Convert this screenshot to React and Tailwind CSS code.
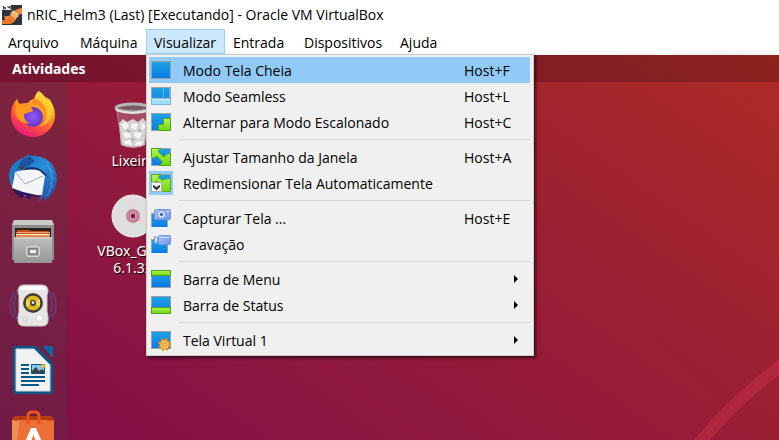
import React from "react";

function Gradients() {
  return (
    <svg className="absolute h-0 w-0" aria-hidden="true">
      <defs>
        <linearGradient id="blue" x1="0" y1="0" x2="0" y2="1">
          <stop offset="0" stopColor="#1fa3e4" />
          <stop offset="1" stopColor="#067be8" />
        </linearGradient>
        <linearGradient id="green" x1="0" y1="0" x2="0" y2="1">
          <stop offset="0" stopColor="#b4f550" />
          <stop offset="1" stopColor="#6fd80c" />
        </linearGradient>
        <linearGradient id="lilac" x1="0" y1="0" x2="1" y2="1">
          <stop offset="0" stopColor="#b3cbff" />
          <stop offset="1" stopColor="#6a90ee" />
        </linearGradient>
      </defs>
    </svg>
  );
}

function Frame({ children }) {
  return (
    <svg viewBox="0 0 20 18" className="h-[18px] w-5" aria-hidden="true">
      {children}
    </svg>
  );
}

function Screen() {
  return <rect x="0.5" y="0.5" width="19" height="17" fill="url(#blue)" stroke="#9aa0a6" />;
}

function SmallScreen() {
  return <rect x="0.5" y="4.5" width="16" height="14" fill="url(#blue)" stroke="#9aa0a6" />;
}

const icons = {
  full: (
    <Frame>
      <Screen />
    </Frame>
  ),
  seamless: (
    <Frame>
      <Screen />
      <path d="M12.5 1v10M18.5 1v10" stroke="#5cb8f2" />
      <path d="M1 10.500h18" stroke="#3f9ada" />
      <rect x="0.5" y="11.5" width="19" height="6" fill="#9be2ff" stroke="#7fb4d4" />
      <path d="M1 12.500h18" stroke="#d8f4ff" />
    </Frame>
  ),
  scale: (
    <Frame>
      <Screen />
      <path d="M7.500 17.500v-5q0-1 1-1h4v-5q0-1 1-1h6v12z" fill="url(#green)" stroke="#4fa61a" />
    </Frame>
  ),
  adjust: (
    <Frame>
      <Screen />
      <path
        d="M.5.500h9L7 3.500l6 5.500 3-3 3.500-.500v12H8.500L11.500 14 5.500 8 3 10.500.5 9z"
        fill="url(#green)"
        stroke="#4fa61a"
      />
    </Frame>
  ),
  resize: (
    <Frame>
      <Screen />
      <path
        d="M.5.500h9L7 3.500l5 3L13 5l6.500-.500v13H8.500V9L5.500 7 2.500 9l-2-1z"
        fill="url(#green)"
        stroke="#5cab26"
      />
      <path d="M10.500 1H19v4l-3-1-2 2-3-3z" fill="#1c9ee6" />
      <rect x="0.500" y="8.500" width="10" height="9" fill="#fff" stroke="#a3adb3" />
      <path d="M2.500 11.500v1.500l3 3 3-3v-1.500l-3 2z" fill="#333" stroke="#333" />
    </Frame>
  ),
  camera: (
    <Frame>
      <SmallScreen />
      <rect x="3.500" y="0.500" width="16" height="10" rx="1.500" fill="url(#lilac)" stroke="#7396dc" />
      <circle cx="10.500" cy="5.500" r="4" fill="#eef3ff" stroke="#6d8bd0" />
      <circle cx="10.500" cy="5.500" r="1.500" fill="#3657ac" stroke="#5574c2" />
      <path d="M16 2.500h2" stroke="#e6efff" />
    </Frame>
  ),
  video: (
    <Frame>
      <SmallScreen />
      <path d="M3.500 1.500l3 1v5l-3 1z" fill="#dbe6ff" stroke="#7396dc" />
      <rect x="7.500" y="0.500" width="12" height="9" rx="1" fill="url(#lilac)" stroke="#7396dc" />
      <path d="M8.500 2.500h10" stroke="#c2d6ff" />
    </Frame>
  ),
  top: (
    <Frame>
      <Screen />
      <rect x="0.500" y="0.500" width="19" height="5" fill="url(#green)" stroke="#559c24" />
    </Frame>
  ),
  bottom: (
    <Frame>
      <Screen />
      <rect x="0.500" y="11.500" width="19" height="6" fill="url(#green)" stroke="#559c24" />
    </Frame>
  ),
  gear: (
    <svg viewBox="0 0 20 20" className="mt-[2px] h-5 w-5" aria-hidden="true">
      <rect x="0.5" y="0.5" width="19" height="17" fill="url(#blue)" stroke="#9aa0a6" />
      <circle cx="13.500" cy="13.500" r="5" fill="none" stroke="#e08a1c" strokeWidth="3" strokeDasharray="2.200 1.727" />
      <circle cx="13.500" cy="13.500" r="4.500" fill="#ffc04d" stroke="#f0a030" />
      <circle cx="13.500" cy="13.500" r="1.500" fill="#fff3d5" stroke="#c27a18" />
    </svg>
  ),
};

const groups = [
  [
    { icon: "full", label: "Modo Tela Cheia", key: "Host+F", active: true },
    { icon: "seamless", label: "Modo Seamless", key: "Host+L" },
    { icon: "scale", label: "Alternar para Modo Escalonado", key: "Host+C" },
  ],
  [
    { icon: "adjust", label: "Ajustar Tamanho da Janela", key: "Host+A" },
    { icon: "resize", label: "Redimensionar Tela Automaticamente", checked: true },
  ],
  [
    { icon: "camera", label: "Capturar Tela ...", key: "Host+E" },
    { icon: "video", label: "Gravação" },
  ],
  [
    { icon: "top", label: "Barra de Menu", sub: true },
    { icon: "bottom", label: "Barra de Status", sub: true },
  ],
  [{ icon: "gear", label: "Tela Virtual 1", sub: true }],
];

function MenuRow({ item }) {
  return (
    <button
      type="button"
      role="menuitem"
      className={`flex h-[26px] w-full items-center text-left ${item.active ? "bg-[#91c9f7]" : ""}`}
    >
      <span className={`flex h-6 w-6 shrink-0 items-center justify-center ${item.checked ? "bg-[#91c9f7]" : ""}`}>
        {icons[item.icon]}
      </span>
      <span className="ml-[10px] grow pt-[2px] whitespace-nowrap">{item.label}</span>
      {item.key && <span className="w-[66px] shrink-0 pt-[2px]">{item.key}</span>}
      {item.sub && (
        <svg viewBox="0 0 4 8" className="mr-3 h-2 w-1" aria-hidden="true">
          <path d="M0 0l4 4-4 4z" />
        </svg>
      )}
    </button>
  );
}

function ViewMenu() {
  return (
    <div
      role="menu"
      className="absolute top-full left-0 z-10 w-[388px] border border-[#cccccc] bg-[#f0f0f0] p-[2px] pr-[3px] shadow-[2px_2px_3px_rgba(0,0,0,0.6)]"
    >
      {groups.map((group, i) => (
        <React.Fragment key={i}>
          {i > 0 && <hr className="my-1 ml-[30px] border-t border-[#d7d7d7]" />}
          {group.map((item) => (
            <MenuRow key={item.label} item={item} />
          ))}
        </React.Fragment>
      ))}
    </div>
  );
}

function AppLogo() {
  return (
    <svg viewBox="0 0 20 20" className="h-5 w-5" aria-hidden="true">
      <rect width="20" height="20" fill="#2c343f" />
      <path d="M2 11q5 1 8-2 2-5 10-6v6q-4 0-5 3-2 6-8 7H2q2-4 0-8z" fill="#f28a3a" />
      <path d="M0 15h4l5-4 4 3q-2 5-6 5H0z" fill="#e9772a" />
      <path d="M11 5l6 6-4 3-5-5z" fill="#f9ae74" />
      <path d="M12 6l4 4" stroke="#fff" />
      <rect width="9" height="5" fill="#f1f1f1" />
      <path d="M1.500 1v3h2V2.500h-2M6 1v1.500h2V1v3" stroke="#444" fill="none" />
    </svg>
  );
}

function Firefox() {
  return (
    <svg viewBox="0 0 48 48" className="h-12 w-12" aria-hidden="true">
      <defs>
        <linearGradient id="fox" x1="0.8" y1="0" x2="0.3" y2="1">
          <stop offset="0" stopColor="#fff44f" />
          <stop offset="0.4" stopColor="#ff9a1f" />
          <stop offset="0.7" stopColor="#ff4f3a" />
          <stop offset="1" stopColor="#e31587" />
        </linearGradient>
        <radialGradient id="globe">
          <stop offset="0" stopColor="#9059ff" />
          <stop offset="1" stopColor="#6a35c4" />
        </radialGradient>
      </defs>
      <path d="M30 1c4 3 6 6 8 9l2-1c4 5 6 10 6 16 0 12-10 22-22 22S2 37 2 25c0-7 2-12 6-16l2 5c4-1 6-1 9-1 2-3 5-4 6-4 1-4 3-7 5-8z" fill="url(#fox)" />
      <circle cx="24" cy="27" r="10" fill="url(#globe)" />
      <path d="M8 9c1 4 4 7 8 7 4-1 7 1 8 5-3 2-7 1-9 4 0 4 2 7 6 8-7 2-14-4-15-11z" fill="#ff981e" />
      <path d="M30 1c-2 6 8 11 8 22 0 7-4 12-10 14 10-1 16-9 16-17 0-5-2-9-5-12-4-1-7-3-9-7z" fill="#ffd331" opacity="0.750" />
      <path d="M25 9c6 1 11 6 12 14-3-6-8-8-15-9z" fill="#ff8b24" />
    </svg>
  );
}

function Thunderbird() {
  return (
    <svg viewBox="0 0 48 48" className="h-12 w-12" aria-hidden="true">
      <defs>
        <linearGradient id="bird" x1="0" y1="0" x2="1" y2="1">
          <stop offset="0" stopColor="#1f65b2" />
          <stop offset="0.5" stopColor="#268fdc" />
          <stop offset="1" stopColor="#233f96" />
        </linearGradient>
      </defs>
      <path d="M20 0l1 2c14-2 27 8 27 23 0 10-6 18-13 22l1-5-6 5 2-6H14c-8-3-14-10-14-19C0 10 9 6 14 4z" fill="url(#bird)" />
      <path d="M8 15C3 20 2 30 6 36V18zM20 2c-7 3-10 7-12 14l10-3 8-6z" fill="#1b539e" />
      <path d="M14 16c6-5 18-4 25 7-6-4-10-5-14-5z" fill="#172f6e" />
      <path d="M6 18c9-2 17-4 25-1l5 5-3 19-17 1L3 34z" fill="#f4f5f8" />
      <path d="M7 19l9 11 18-8" fill="none" stroke="#a4a8b1" />
      <path d="M3 34l11 4 18 4-4 1-5-1-3 4-4-5-3 3c-5-2-8-6-10-10z" fill="#31195d" />
      <path d="M38 11c7 10 6 22 0 31M41 14l4 6M42 21l4 5M41 29l4 5" stroke="#4baee9" fill="none" opacity="0.800" />
      <circle cx="13" cy="14" r="2" fill="#4a4038" />
    </svg>
  );
}

function Files() {
  return (
    <svg viewBox="0 0 48 48" className="h-12 w-12" aria-hidden="true">
      <defs>
        <linearGradient id="drawer" x1="0" y1="0" x2="0" y2="1">
          <stop offset="0" stopColor="#bdbdbd" />
          <stop offset="1" stopColor="#969696" />
        </linearGradient>
      </defs>
      <path d="M5 2h38l2 5v35H3V7z" fill="#8e8e8e" />
      <path d="M5 2h38l2 5H3z" fill="#c9c9c9" />
      <path d="M6 10h36v10H6z" fill="#2b221b" />
      <path d="M8 12h13v1h19v6H8z" fill="#c9501a" />
      <path d="M7 14.500h34" stroke="#f3a366" />
      <path d="M7 16.500h34" stroke="#fff5df" />
      <path d="M7 17h34v3H7z" fill="#e58b4a" />
      <path d="M5 19.500h38V45H5z" fill="url(#drawer)" />
      <path d="M5 20h38" stroke="#e3e3e3" />
      <rect x="17.500" y="28.500" width="13" height="10" rx="2" fill="#b4b4b4" stroke="#d9d9d9" />
      <rect x="20" y="31" width="8" height="5" fill="#eee" stroke="#484848" />
    </svg>
  );
}

function Rhythmbox() {
  return (
    <svg viewBox="0 0 48 48" className="h-12 w-12" aria-hidden="true">
      <path d="M9 8c-5 8-5 21 0 30M39 8c5 8 5 21 0 30M5 10c-5 8-5 18 0 26M43 10c5 8 5 18 0 26" fill="none" stroke="#575a9c" strokeWidth="2" opacity="0.450" />
      <path d="M15 3h18q6 0 6 6l-1 4v17l1 5v3q0 6-6 6H15q-6 0-6-6v-3l1-5V13L9 9q0-6 6-6z" fill="#e6e6e4" stroke="#c8c8c8" />
      <path d="M14 4h20q3 1 3 4H11q0-3 3-4z" fill="#fafafa" />
      <circle cx="24" cy="21" r="10" fill="#4a4a48" />
      <circle cx="24" cy="21" r="8" fill="#dcb81c" stroke="#2b2b2b" />
      <path d="M24 21l-7 4v-8zM24 21l7-4v8z" fill="#ffeb73" opacity="0.600" />
      <circle cx="24" cy="21" r="3" fill="#3b3b3b" />
      <circle cx="24" cy="20.500" r="1.500" fill="#ddd" />
      <circle cx="30.500" cy="36" r="3.500" fill="#fff" stroke="#cfcfcf" />
      <path d="M14 35h4v4h-4z" fill="none" stroke="#cfcfcf" />
    </svg>
  );
}

function Writer() {
  return (
    <svg viewBox="0 0 48 48" className="h-12 w-12" aria-hidden="true">
      <path d="M6 0h21l17 17v28q0 3-3 3H7q-3 0-3-3V3q0-3 2-3z" fill="#075886" />
      <path d="M7 3h18l16 16v26H7z" fill="#f2f2f3" stroke="#ccd1d5" />
      <path d="M33 0h9q2 0 2 2v10z" fill="#0868a5" />
      <path d="M12 19h8M12 23h8M12 27h8M12 31h24M12 35h24M12 39h18" stroke="#08598a" strokeWidth="2" />
      <rect x="22.500" y="18.500" width="13" height="9" fill="#88c7ee" stroke="#08598a" />
      <circle cx="34" cy="20" r="2" fill="#e9c42d" />
      <path d="M23 27v-2l4-4 3 4 3-2 2 2v2z" fill="#3c4245" />
    </svg>
  );
}

function Software() {
  return (
    <svg viewBox="0 0 48 48" className="h-12 w-12" aria-hidden="true">
      <path d="M3 9l3-3h36l3 3v4H3z" fill="#b73a13" />
      <path d="M3 10l4 1 3-1h28l3 1 4-1v38H3z" fill="#ed7137" />
      <path d="M3 10l4 1 3-1-3 38H3z" fill="#ed9055" />
      <path d="M19 14V6q0-4 4-4h3q4 0 4 4v8" fill="none" stroke="#e6551b" strokeWidth="3" />
      <path d="M22 18h5l9 21h-6l-5.500-14L19 39h-6z" fill="#fff" />
    </svg>
  );
}

function Trash() {
  return (
    <svg viewBox="0 0 40 48" className="h-12 w-10" aria-hidden="true">
      <path d="M4 7h32l-4 36q-12 5-24 0z" fill="#c9a9b5" opacity="0.350" />
      <path d="M6 21l4-4 4 3 6-3 5 3 5-4 4 5-2 22q-12 5-24 0z" fill="#d6d4d3" />
      <path d="M8 22l5-2 3 4-4 4zM19 21l6 1-2 6-5-2zM28 21l5 3-4 5zM10 31l6-2 2 6-6 1zM22 30l7 1-3 6-5-3zM11 39l6-1 2 5-7-1zM23 40l7-1-2 4h-6z" fill="#f6f6f5" />
      <path d="M13 27l5 2-3 2zM25 27l4 1-3 2zM18 36l4 1-2 3z" fill="#aeaaa9" />
      <path d="M4 9l5 34q11 4 22 0l5-34" fill="none" stroke="#b7a3aa" opacity="0.700" />
      <ellipse cx="20" cy="6" rx="17" ry="4" fill="#7a5a62" stroke="#b5b5b3" strokeWidth="3" />
      <path d="M3 8q17 6 34 0" stroke="#e4e4e2" strokeWidth="2" fill="none" />
    </svg>
  );
}

function Disc() {
  return (
    <svg viewBox="0 0 44 44" className="h-11 w-11" aria-hidden="true">
      <circle cx="22" cy="22" r="21" fill="#dedede" stroke="#f1f1f1" />
      <path d="M22 22L7 7l5-4zM22 22l15 15-5 4z" fill="#cfe6dc" />
      <path d="M22 22L12 3l5-2zM22 22l19 9-3 6z" fill="#efd5d8" />
      <circle cx="22" cy="22" r="7" fill="#c58299" />
      <circle cx="22" cy="22" r="3" fill="#8e1b43" stroke="#e4bac8" />
    </svg>
  );
}

const menus = [
  { label: "Arquivo", width: "w-[72px]" },
  { label: "Máquina", width: "w-[74px]" },
  { label: "Visualizar", width: "w-[79px]", open: true },
  { label: "Entrada", width: "w-[71px]" },
  { label: "Dispositivos", width: "w-24" },
  { label: "Ajuda", width: "w-[60px]" },
];

const dock = [
  ["Firefox", Firefox],
  ["Thunderbird", Thunderbird],
  ["Arquivos", Files],
  ["Rhythmbox", Rhythmbox],
  ["Writer", Writer],
  ["Software", Software],
];

export default function App() {
  return (
    <div className="flex h-screen flex-col overflow-hidden bg-white font-['Open_Sans','Noto_Sans',sans-serif] text-sm text-black">
      <Gradients />
      <header className="flex h-[29px] shrink-0 items-center gap-[5px] pl-[2px]">
        <AppLogo />
        <h1 className="whitespace-nowrap">nRIC_Helm3 (Last) [Executando] - Oracle VM VirtualBox</h1>
      </header>
      <nav className="flex h-[25px] shrink-0">
        {menus.map((m) => (
          <div key={m.label} className={`relative ${m.width}`}>
            <button
              type="button"
              className={`h-[25px] w-full border pt-[2px] pl-[7px] text-left whitespace-nowrap ${
                m.open ? "border-[#99d1ff] bg-[#cce8ff]" : "border-transparent"
              }`}
            >
              {m.label}
            </button>
            {m.open && <ViewMenu />}
          </div>
        ))}
      </nav>
      <main className="relative flex min-h-0 grow flex-col border-t border-[#f0f0f0] bg-[linear-gradient(35deg,#7c0c49_0%,#8a1540_28%,#9a1f33_62%,#ae2c26_100%)] text-white">
        <svg viewBox="0 0 779 385" preserveAspectRatio="xMaxYMax slice" className="absolute inset-0 h-full w-full" aria-hidden="true">
          <path d="M440 70L755 385H0V0h370z" fill="#b52a50" opacity="0.080" />
          <path d="M694 385Q733 338 779 305V320Q743 347 710 385z" fill="#bd2d45" opacity="0.650" />
        </svg>
        <div className="relative flex h-[27px] shrink-0 items-center bg-black/20 pl-3 font-['Noto_Sans',sans-serif] text-sm font-bold">
          Atividades
        </div>
        <div className="relative flex min-h-0 grow">
          <aside className="flex w-[67px] shrink-0 flex-col items-center gap-4 overflow-hidden bg-[#444444]/25 pt-2 pr-px">
            {dock.map(([name, Icon]) => (
              <button key={name} type="button" aria-label={name} className="shrink-0">
                <Icon />
              </button>
            ))}
          </aside>
          <div className="flex w-[132px] flex-col items-center pt-5 text-center font-['Noto_Sans',sans-serif] text-sm leading-[17px] [text-shadow:1px_1px_1px_#000]">
            <Trash />
            <span className="mt-[2px]">Lixeira</span>
            <div className="mt-[25px] flex flex-col items-center">
              <Disc />
              <span className="mt-1">
                VBox_GAs_
                <br />
                6.1.32
              </span>
            </div>
          </div>
        </div>
      </main>
    </div>
  );
}
